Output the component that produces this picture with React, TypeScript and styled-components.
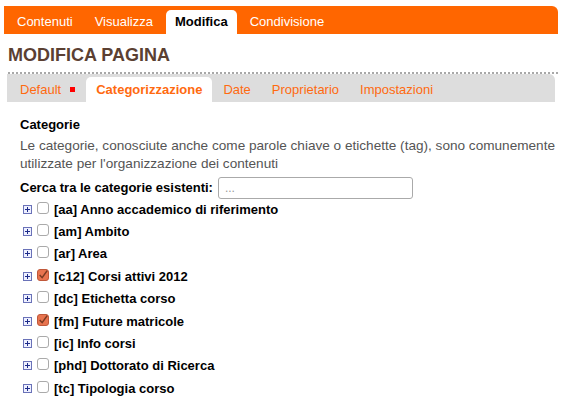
import { createGlobalStyle, styled } from "styled-components";

const GlobalStyle = createGlobalStyle`
  html, body {
    margin: 0;
    padding: 0;
    background: #fff;
    font-family: "Liberation Sans", Arial, sans-serif;
  }
`;

const MAIN_TABS = ["Contenuti", "Visualizza", "Modifica", "Condivisione"];
const SUB_TABS = ["Default", "Categorizzazione", "Date", "Proprietario", "Impostazioni"];

const CATEGORIES = [
  { code: "aa", name: "Anno accademico di riferimento", checked: false },
  { code: "am", name: "Ambito", checked: false },
  { code: "ar", name: "Area", checked: false },
  { code: "c12", name: "Corsi attivi 2012", checked: true },
  { code: "dc", name: "Etichetta corso", checked: false },
  { code: "fm", name: "Future matricole", checked: true },
  { code: "ic", name: "Info corsi", checked: false },
  { code: "phd", name: "Dottorato di Ricerca", checked: false },
  { code: "tc", name: "Tipologia corso", checked: false },
];

function PlusIcon() {
  return (
    <svg width="9" height="9" viewBox="0 0 9 9">
      <rect x="0.5" y="0.5" width="8" height="8" fill="#eef0ff" stroke="#6a72b8" />
      <path d="M2 4.5h5M4.5 2v5" stroke="#1d2b8a" strokeWidth="1" />
    </svg>
  );
}

function CheckBox({ checked }: { checked: boolean }) {
  if (!checked) return <S.Box />;
  return (
    <S.Box $checked>
      <svg width="12" height="12" viewBox="0 0 12 12">
        <path d="M2 6l3 3.2 6-8.5" stroke="#7a3a22" strokeWidth="1.8" fill="none" />
      </svg>
    </S.Box>
  );
}

export default function App() {
  return (
    <S.Page>
      <GlobalStyle />
      <S.MainBar>
        {MAIN_TABS.map((t) => (
          <S.MainTab key={t} $active={t === "Modifica"}>
            {t}
          </S.MainTab>
        ))}
      </S.MainBar>

      <S.Heading>MODIFICA PAGINA</S.Heading>

      <S.SubBar>
        {SUB_TABS.map((t) => (
          <S.SubTab key={t} $active={t === "Categorizzazione"}>
            {t}
            {t === "Default" && <S.RedMark />}
          </S.SubTab>
        ))}
      </S.SubBar>

      <S.Content>
        <S.Label>Categorie</S.Label>
        <S.Help>
          Le categorie, conosciute anche come parole chiave o etichette (tag), sono comunemente
          utilizzate per l'organizzazione dei contenuti
        </S.Help>
        <S.SearchRow>
          <S.Label>Cerca tra le categorie esistenti:</S.Label>
          <S.Search placeholder="..." />
        </S.SearchRow>

        <S.List>
          {CATEGORIES.map((c) => (
            <S.Item key={c.code}>
              <PlusIcon />
              <CheckBox checked={c.checked} />
              <S.ItemText>
                [{c.code}] {c.name}
              </S.ItemText>
            </S.Item>
          ))}
        </S.List>
      </S.Content>
    </S.Page>
  );
}

const S = {
  Page: styled.div`
    width: 566px;
    height: 402px;
    overflow: hidden;
    padding: 6px 8px 0 4px;
    box-sizing: border-box;
  `,

  MainBar: styled.div`
    display: flex;
    align-items: flex-end;
    height: 28px;
    background: #ff6600;
    border-top-right-radius: 6px;
    padding-left: 4px;
  `,

  MainTab: styled.div<{ $active?: boolean }>`
    height: 24px;
    line-height: 24px;
    padding: 0 9px 0 9px;
    margin-right: 4px;
    font-size: 13px;
    border-radius: 5px 5px 0 0;
    color: ${(p) => (p.$active ? "#000" : "#fff")};
    font-weight: ${(p) => (p.$active ? "bold" : "normal")};
    background: ${(p) => (p.$active ? "#fff" : "transparent")};
  `,

  Heading: styled.h1`
    margin: 10px 0 0 4px;
    font-size: 18px;
    line-height: 22px;
    font-weight: bold;
    color: #5b4032;
    padding-bottom: 6px;
    border-bottom: 2px dotted #a8a8a8;
  `,

  SubBar: styled.div`
    display: flex;
    align-items: flex-end;
    height: 28px;
    margin: 0 3px 0 3px;
    background: #dddddd;
    border-top-right-radius: 6px;
    padding-left: 3px;
  `,

  SubTab: styled.div<{ $active?: boolean }>`
    display: flex;
    align-items: center;
    height: 25px;
    padding: 0 10px;
    margin-right: 1px;
    font-size: 13px;
    color: #ff6a10;
    border-radius: 5px 5px 0 0;
    font-weight: ${(p) => (p.$active ? "bold" : "normal")};
    background: ${(p) => (p.$active ? "#fff" : "transparent")};
    &:first-child {
      margin-right: 0;
      padding-right: 11px;
    }
  `,

  RedMark: styled.span`
    display: inline-block;
    width: 5px;
    height: 5px;
    background: #ff0000;
    margin-left: 9px;
  `,

  Content: styled.div`
    padding: 15px 0 0 16px;
  `,

  Label: styled.div`
    font-size: 13px;
    font-weight: bold;
    color: #000;
    line-height: 16px;
  `,

  Help: styled.p`
    margin: 4px 0 4px;
    font-size: 13.6px;
    line-height: 18px;
    color: #555;
  `,

  SearchRow: styled.div`
    display: flex;
    align-items: center;
    gap: 5px;
  `,

  Search: styled.input`
    width: 195px;
    height: 22px;
    box-sizing: border-box;
    border: 1px solid #aaa;
    border-radius: 3px;
    padding: 0 6px;
    font-size: 12px;
    font-family: inherit;
    &::placeholder {
      color: #999;
    }
  `,

  List: styled.div`
    display: flex;
    flex-direction: column;
    margin-top: -1px;
    padding-left: 3px;
  `,

  Item: styled.div`
    display: flex;
    align-items: center;
    height: 22.4px;
    gap: 5px;
  `,

  Box: styled.span<{ $checked?: boolean }>`
    display: inline-flex;
    align-items: center;
    justify-content: center;
    width: 10px;
    height: 10px;
    border: 1px solid ${(p) => (p.$checked ? "#c0583a" : "#aaa")};
    border-radius: 3px;
    background: ${(p) => (p.$checked ? "#e8744f" : "#fff")};
    margin-top: -3px;
  `,

  ItemText: styled.span`
    font-size: 13px;
    font-weight: bold;
    color: #000;
  `,
};
